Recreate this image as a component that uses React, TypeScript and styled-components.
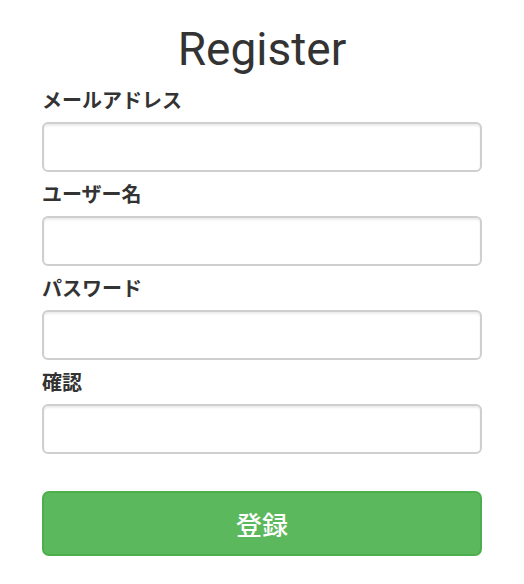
import React from 'react';
import styled, { createGlobalStyle } from 'styled-components';

const GlobalStyle = createGlobalStyle`
    html, body {
        margin: 0;
        padding: 0;
        background: #fff;
    }
    * {
        box-sizing: border-box;
    }
`;

const Page = styled.div`
    padding: 24px 42px 0;
    font-family: 'Noto Sans CJK JP', 'Noto Sans', sans-serif;
    color: #333;
`;

const Title = styled.h1`
    margin: 0 0 12px;
    font-family: Roboto, 'Noto Sans', sans-serif;
    font-weight: 400;
    font-size: 46px;
    line-height: 50px;
    text-align: center;
    color: #333;
`;

const Form = styled.form`
    display: flex;
    flex-direction: column;
`;

const Group = styled.div`
    display: flex;
    flex-direction: column;
    margin-bottom: 8px;
`;

const Label = styled.label`
    font-weight: 700;
    font-size: 20px;
    line-height: 28px;
    margin-bottom: 8px;
    color: #333;
`;

const Input = styled.input`
    height: 50px;
    width: 100%;
    border: 2px solid #cfcfcf;
    border-radius: 6px;
    box-shadow: inset 0 2px 2px rgba(0, 0, 0, 0.075);
    padding: 8px 16px;
    font-size: 19px;
    outline: none;
`;

const SubmitButton = styled.button`
    margin-top: 29px;
    height: 65px;
    width: 100%;
    border: 2px solid #4cae4c;
    border-radius: 7px;
    background: #5cb85c;
    color: #fff;
    font-family: 'Noto Sans CJK JP', sans-serif;
    font-size: 26px;
    font-weight: 500;
    cursor: pointer;
`;

const fields = [
    { label: 'メールアドレス', type: 'email' },
    { label: 'ユーザー名', type: 'text' },
    { label: 'パスワード', type: 'password' },
    { label: '確認', type: 'password' },
];

export default function App() {
    return (
        <>
            <GlobalStyle />
            <Page>
                <Title>Register</Title>
                <Form onSubmit={(e) => e.preventDefault()}>
                    {fields.map((f) => (
                        <Group key={f.label}>
                            <Label>{f.label}</Label>
                            <Input type={f.type} />
                        </Group>
                    ))}
                    <SubmitButton type="submit">登録</SubmitButton>
                </Form>
            </Page>
        </>
    );
}
